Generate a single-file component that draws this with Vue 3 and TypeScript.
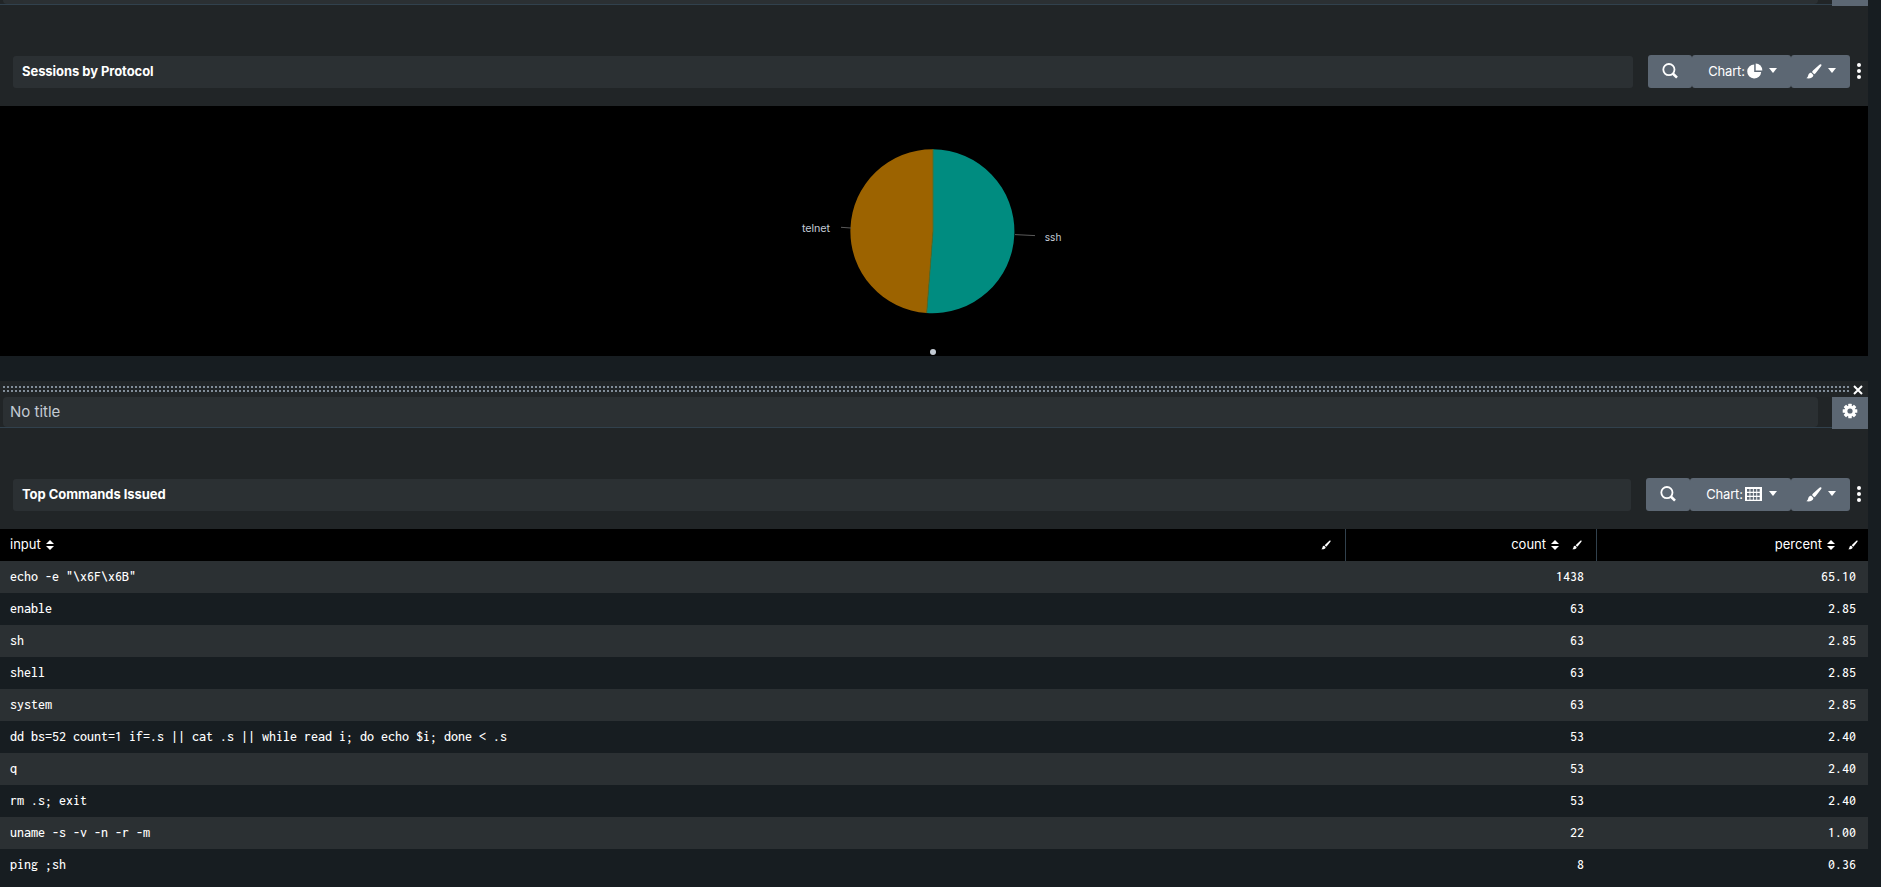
<script setup lang="ts">
interface Row { input: string; count: string; percent: string }

const rows: Row[] = [
  { input: 'echo -e "\\x6F\\x6B"', count: '1438', percent: '65.10' },
  { input: 'enable', count: '63', percent: '2.85' },
  { input: 'sh', count: '63', percent: '2.85' },
  { input: 'shell', count: '63', percent: '2.85' },
  { input: 'system', count: '63', percent: '2.85' },
  { input: 'dd bs=52 count=1 if=.s || cat .s || while read i; do echo $i; done < .s', count: '53', percent: '2.40' },
  { input: 'q', count: '53', percent: '2.40' },
  { input: 'rm .s; exit', count: '53', percent: '2.40' },
  { input: 'uname -s -v -n -r -m', count: '22', percent: '1.00' },
  { input: 'ping ;sh', count: '8', percent: '0.36' },
]
const columns = ['input', 'count', 'percent'] as const

const panels = [
  { title: 'Sessions by Protocol', kind: 'pie' },
  { title: 'Top Commands Issued', kind: 'table' },
] as const
</script>

<template>
  <div class="page">
    <section v-for="panel in panels" :key="panel.kind" class="panel" :class="panel.kind">
      <div v-if="panel.kind === 'table'" class="drag">
        <div class="dots"></div>
        <svg class="close" width="10" height="10" viewBox="0 0 10 10">
          <path d="M1 1L9 9M9 1L1 9" stroke="#fff" stroke-width="2" />
        </svg>
      </div>

      <header class="panel-head">
        <div class="panel-title"><span v-if="panel.kind === 'table'">No title</span></div>
        <button class="gear">
          <svg v-if="panel.kind === 'table'" width="16" height="16" viewBox="-8 -8 16 16">
            <g fill="#fff">
              <rect v-for="a in [0, 45, 90, 135]" :key="a" x="-1.75" y="-7.3" width="3.5" height="14.6" rx="0.5" :transform="`rotate(${a})`" />
              <circle r="5.5" />
            </g>
            <circle r="2.6" fill="#5c6773" />
          </svg>
        </button>
      </header>

      <div class="element-head">
        <div class="element-title">{{ panel.title }}</div>
        <div class="tools">
          <button class="btn search">
            <svg width="16" height="16" viewBox="0 0 16 16" fill="none" stroke="#fff">
              <circle cx="6.9" cy="6.6" r="5.6" stroke-width="1.8" />
              <path d="M10.8 10.5L15 14.7" stroke-width="2.6" />
            </svg>
          </button>
          <button class="btn chart">
            <span>Chart:</span>
            <svg v-if="panel.kind === 'pie'" class="kind" width="16" height="16" viewBox="0 0 16 16" fill="#fff">
              <path d="M7.2 1.4A7 7 0 1 0 14.2 8.9H7.2Z" />
              <path d="M8.7 0.4A6.9 6.9 0 0 1 15.3 7.4H8.7Z" />
            </svg>
            <svg v-else class="kind" width="17" height="14" viewBox="0 0 17 14">
              <rect width="17" height="14" fill="#fff" />
              <g fill="#5c6773">
                <template v-for="y in [2, 6, 10]" :key="y">
                  <rect v-for="x in [2, 5.4, 8.8, 12.2]" :key="x" :x="x" :y="y" width="2.5" height="2.7" />
                </template>
              </g>
            </svg>
            <svg class="caret" width="8" height="5" viewBox="0 0 8 5"><path d="M0 0H8L4 5Z" fill="#fff" /></svg>
          </button>
          <button class="btn format">
            <svg width="16" height="15" viewBox="0 0 16 15" fill="#fff">
              <path d="M15 0.3C15.7 0.8 15.7 1.3 15 2.2L9.6 9.2L8.2 10.2L6 8L7 6.6L13.4 0.7C14 0.2 14.5 0 15 0.3Z" />
              <path d="M5.2 8.8L7.4 11C7.3 13.6 4.4 14.8 0.4 14.3C2.2 13.2 1.9 12.1 2.5 10.6C3 9.3 4 8.8 5.2 8.8Z" />
            </svg>
            <svg class="caret" width="8" height="5" viewBox="0 0 8 5"><path d="M0 0H8L4 5Z" fill="#fff" /></svg>
          </button>
          <svg class="kebab" width="4" height="16" viewBox="0 0 4 16" fill="#fff">
            <circle cx="2" cy="2" r="2" /><circle cx="2" cy="8" r="2" /><circle cx="2" cy="14" r="2" />
          </svg>
        </div>
      </div>

      <div v-if="panel.kind === 'pie'" class="chart-area">
        <svg width="1868" height="250" viewBox="0 106 1868 250">
          <path d="M933 231.3V149.3A82 82 0 1 1 926.7 313.1Z" fill="#008c80" />
          <path d="M933 231.3L926.7 313.1A82 82 0 0 1 933 149.3Z" fill="#9c6300" />
          <path d="M933 149.3V231.3L926.7 313.1" fill="none" stroke="#4e6f30" stroke-width="0.9" />
          <path d="M841 227.3L851 228M1015 234.6L1035 235.6" stroke="#5a5a5a" stroke-width="1" />
          <g class="pie-labels">
            <text x="802" y="232.3" textLength="28">telnet</text>
            <text x="1044.8" y="241" textLength="16.6" lengthAdjust="spacingAndGlyphs">ssh</text>
          </g>
          <circle cx="933" cy="352" r="3" fill="#c3cbd4" />
        </svg>
      </div>

      <div v-else class="results">
        <div class="row head">
          <div v-for="c in columns" :key="c" class="cell" :class="c">
            <span>{{ c }}</span>
            <svg class="sort" width="8" height="10" viewBox="0 0 8 10" fill="#fff"><path d="M0 4L4 0L8 4ZM0 6H8L4 10Z" /></svg>
            <svg class="brush" width="10" height="10" viewBox="0 0 16 15" fill="#fff">
              <path d="M15 0.3C15.7 0.8 15.7 1.3 15 2.2L9.6 9.2L8.2 10.2L6 8L7 6.6L13.4 0.7C14 0.2 14.5 0 15 0.3Z" />
              <path d="M5.2 8.8L7.4 11C7.3 13.6 4.4 14.8 0.4 14.3C2.2 13.2 1.9 12.1 2.5 10.6C3 9.3 4 8.8 5.2 8.8Z" />
            </svg>
          </div>
        </div>
        <div v-for="r in rows" :key="r.input" class="row body">
          <div v-for="c in columns" :key="c" class="cell" :class="c">{{ r[c] }}</div>
        </div>
      </div>
    </section>
  </div>
</template>

<style>
body { background: #171d21; overflow: hidden; }
</style>

<style scoped>
.page {
  width: 1868px;
  height: 887px;
  overflow: hidden;
  background: #171d21;
  color: #fff;
  font: 13px/20px Inter, "Liberation Sans", sans-serif;
}
.page * { box-sizing: border-box; }
.panel { background: #212527; }
.panel svg { display: block; flex: none; }
.panel.pie { height: 356px; margin-bottom: 25px; }

.drag { display: flex; height: 16px; padding: 5px 5px 0 3px; justify-content: space-between; }
.dots {
  width: 1846px;
  height: 6px;
  background-image: conic-gradient(from 270deg at 2px 2px, #818d99 90deg, transparent 0);
  background-size: 4px 4px;
}
.close { margin: -1px 0 0 auto; }

.panel-head { display: flex; height: 31px; padding-left: 3px; justify-content: space-between; border-bottom: 1px solid #31414d; }
.pie .panel-head { height: 5px; }
.panel-title {
  width: 1815px;
  padding: 0 7px;
  background: #2b3033;
  border-radius: 4px;
  font-size: 15px;
  line-height: 30px;
  color: #c3cbd4;
}
.pie .panel-title { border-radius: 0 0 4px 4px; }
button { border: 0; margin: 0; padding: 0; font: inherit; color: inherit; background: #5c6773; }
.gear { display: flex; width: 36px; height: 32px; flex: none; padding: 6px 10px; }
.pie .gear { height: 6px; padding: 0; }

.element-head { display: flex; height: 101px; padding: 50px 7px 0 13px; justify-content: space-between; }
.element-title {
  width: 1620px;
  height: 32px;
  margin-top: 1px;
  padding-left: 9px;
  background: #2b3033;
  border-radius: 3px;
  font-weight: 700;
  letter-spacing: -0.06px;
  line-height: 31px;
}
.table .element-title { width: 1618px; line-height: 30px; }
.tools { display: flex; }
.btn { display: flex; height: 33px; border-radius: 3px; }
.search { width: 44px; padding: 8px 0 0 14px; }
.chart { width: 99px; padding: 6px 0 0 14px; }
.chart span { width: 41px; letter-spacing: -0.2px; }
.kind { margin-top: 2px; }
.chart .caret { margin: 7px 0 0 6px; }
.table .chart { width: 101px; }
.table .kind { margin-top: 3px; }
.table .chart .caret { margin-left: 7px; }
.format { width: 59px; padding: 9px 0 0 15px; }
.format .caret { margin: 4px 0 0 6px; }
.kebab { margin: 8px 0 0 7px; }

.chart-area { height: 250px; background: #000; }
.pie-labels { font-size: 10.8px; fill: #c3cbd4; }

.row { display: grid; grid-template-columns: 1346px 251px 271px; height: 32px; }
.head { background: #000; }
.body { background: #171d21; font: 500 14px/32px Inconsolata, "Noto Sans Mono CJK SC", monospace; }
.body:nth-child(even) { background: #2b3033; }
.cell { padding: 0 12px 0 10px; text-align: right; white-space: pre; }
.cell.count { padding-right: 13px; }
.cell.input { text-align: left; }
.head .cell { display: flex; align-items: center; justify-content: flex-end; border-right: 1px solid #31414d; }
.head .input, .head .cell.count { padding-right: 14px; }
.head .percent { border-right: 0; padding-right: 10px; }
.head .input { justify-content: flex-start; }
.head .input .brush { margin-left: auto; }
.head span { line-height: 31px; margin-bottom: 1px; }
.sort { margin: 0 0 1px 5px; }
.brush { margin: 0 0 1px 13px; }
</style>
